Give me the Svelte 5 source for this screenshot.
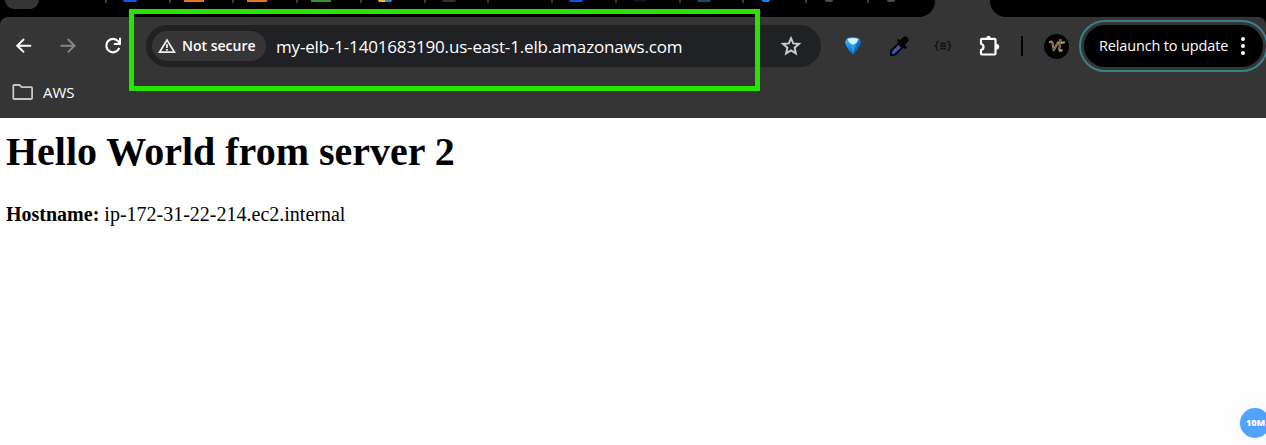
<script>
  const tabs = [
    { w: 64, color: '#0b57e8', shape: 'round', pos: 18 },
    { w: 63, color: '#ea761c', shape: 'box', pos: 15 },
    { w: 64, color: '#ea761c', shape: 'box', pos: 15 },
    { w: 64, color: '#3f8c2c', shape: 'box', pos: 15 },
    { w: 64, color: 'linear-gradient(90deg, #ffb020 50%, #1695d0 50%)', shape: 'round', pos: 18 },
    { w: 63, color: '#303135', shape: 'round', pos: 18 },
    { w: 64, color: 'transparent', shape: 'box', pos: 14 },
    { w: 64, color: '#0b57e8', shape: 'round', pos: 18 },
    { w: 64, color: '#030c20', shape: 'round', pos: 18 },
    { w: 63, color: '#22465a', shape: 'round', pos: 18 },
    { w: 63, color: '#1a80ff', shape: 'small', pos: 20 },
    { w: 62, color: '#4a4c50', shape: 'small', pos: 20 },
    { w: 62, color: '#4a4c50', shape: 'small', pos: 20 }
  ];
</script>

<div class="window">
  <div class="strip">
    <div class="left-tabs">
      <div class="search-tab"></div>
      {#each tabs as tab}
        <div class="tab" style="width: {tab.w}px">
          <i class="sep"></i>
          <i class="fav {tab.shape}" style="background: {tab.color}; margin-left: {tab.pos - 2}px"></i>
        </div>
      {/each}
    </div>
    <div class="right-strip"></div>
  </div>

  <div class="toolbar">
    <svg class="back" width="20" height="20" viewBox="0 0 20 20" fill="none" stroke="#fff" stroke-width="2">
      <path d="M17.2 9.700H4M10 3 3.300 9.700l6.700 6.700" />
    </svg>
    <svg class="forward" width="20" height="20" viewBox="0 0 20 20" fill="none" stroke="#858585" stroke-width="2">
      <path d="M2.500 9.700H16M9.800 3 16.500 9.700l-6.700 6.700" />
    </svg>
    <svg class="reload" width="20" height="20" viewBox="0 0 20 20" fill="none" stroke="#fff" stroke-width="2.200">
      <path d="M16.300 11.900A6.700 6.700 0 1 1 15.100 5.200L16.500 6.800" />
      <path d="M17 1.700v6.200h-6.200" stroke-width="2" />
    </svg>

    <div class="address">
      <div class="chip">
        <svg width="18" height="16" viewBox="0 0 18 16" fill="none" stroke="#f1f1f1">
          <path d="M9 2 1.500 14.200h15Z" stroke-width="1.700" />
          <path d="M9 6v4M9 11v1.800" stroke-width="1.700" />
        </svg>
        <span>Not secure</span>
      </div>
      <span class="url">my-elb-1-1401683190.us-east-1.elb.amazonaws.com</span>
      <svg class="star" width="22" height="22" viewBox="0 0 22 22" fill="none" stroke="#c9cacc" stroke-width="2">
        <path d="m11 3.200 2.200 5.200 5.800.5-4.400 3.800 1.300 5.700-4.900-3-4.900 3 1.300-5.700L3 8.900l5.800-.5Z" />
      </svg>
    </div>

    <svg class="gem" width="18" height="20" viewBox="0 0 18 20">
      <defs>
        <linearGradient id="gem" x1="0" y1="0" x2="1" y2="1">
          <stop offset="0" stop-color="#56c0f8" /><stop offset=".45" stop-color="#1689e6" /><stop offset="1" stop-color="#033d7d" />
        </linearGradient>
      </defs>
      <path d="M3 2.500Q9 0 15 2.500L17 6Q16 11 9.800 18.500H8.200Q2 11 1 6Z" fill="url(#gem)" />
      <path d="M3.500 3Q9 .8 14.500 3L12.500 7 9 9 5.500 7Z" fill="#d8f3fd" />
      <path d="m5.500 7 3.500 10L12.500 7 9 9Z" fill="#2b9fe9" />
    </svg>

    <svg class="picker" width="22" height="22" viewBox="0 0 22 22">
      <path d="M3 20v-4L12 7l4 4-9.500 9Z" fill="#4052bd" stroke="#050507" stroke-width="2" stroke-linejoin="round" />
      <path d="M10.800 8.200 14.300 11.700" stroke="#050507" stroke-width="3" />
      <path d="m10.500 5.500 7 7" stroke="#050507" stroke-width="2.800" stroke-linecap="round" />
      <path d="m14.500 7.500 2.700-2.700" stroke="#050507" stroke-width="6.500" stroke-linecap="round" />
    </svg>

    <svg class="braces" width="18" height="14" viewBox="0 0 18 14" fill="none" stroke="#121212" stroke-width="1.300">
      <path d="M4.500 2.500H4Q2.800 2.500 2.800 4V5.500L1.300 7l1.500 1.500V10q0 1.500 1.700 1.500M13.500 2.500h.5q1.200 0 1.200 1.500V5.500L16.700 7l-1.500 1.500V10q0 1.500-1.700 1.500M6 4.500h6M6 7h6M6 9.500h6" />
    </svg>

    <svg class="puzzle" width="23" height="23" viewBox="0 0 23 23" fill="none" stroke="#fff" stroke-width="2.200" stroke-linejoin="round">
      <path d="M4 3.800h12.500q1 0 1 1V18.500q0 1-1 1H4q-1 0-1-1V15q2.500-.7 2.500-3.100T3 8.700V4.800q0-1 1-1Z" />
      <path d="M8 3.500Q8.500 .7 10.500 .7t2.500 2.800ZM18 8.800q3.200.2 3.200 3T18 14.800Z" fill="#fff" stroke="none" />
    </svg>
    <div class="divider"></div>
    <div class="avatar">
      <svg width="18" height="16" viewBox="0 0 18 16" fill="none" stroke="#b0976b" stroke-width="2.200" stroke-linecap="round" stroke-linejoin="round">
        <path d="M2 4q2-1 2.500 1l1.300 7L10 4.500M12.500 1.800 11.300 11q0 2.200 2.400 1.400M9.800 5.500 16 4.300" />
        <path d="M2.500 4q1.500-.5 2 1l1.300 7L10 4.500M12.500 1.800 11.300 11" stroke="#463c2b" stroke-width=".7" />
      </svg>
    </div>
    <div class="ring">
      <div class="relaunch">
        <span>Relaunch to update</span>
        <div class="dots"><i></i><i></i><i></i></div>
      </div>
    </div>
  </div>

  <div class="bookmarks">
    <svg width="22" height="18" viewBox="0 0 22 18" fill="none" stroke="#c7c7c7" stroke-width="1.800" stroke-linejoin="round">
      <path d="M2.300 3q0-1 1-1H8.500l2.200 2.200h9.400q1 0 1 1V15q0 1-1 1H3.300q-1 0-1-1Z" />
    </svg>
    <span>AWS</span>
  </div>

  <main>
    <h1>Hello World from server 2</h1>
    <p><b>Hostname:</b> ip-172-31-22-214.ec2.internal</p>
  </main>

  <div class="highlight"></div>
  <div class="badge">10M</div>
</div>

<style>
  :global(body) { margin: 0; background: #fff; }
  .window {
    position: relative;
    width: 1266px;
    height: 445px;
    overflow: hidden;
    background: #000;
    font-family: "Open Sans", "Noto Sans", sans-serif;
  }
  svg { display: block; flex: none; }
  span { white-space: nowrap; }
  .strip { display: flex; justify-content: space-between; height: 17px; background: #353535; }
  .left-tabs { display: flex; width: 935px; background: #000; border-bottom-right-radius: 16px; }
  .search-tab { width: 34px; height: 9px; margin: 0 66px 0 5px; flex: none; background: #353535; border-radius: 0 0 12px 12px; }
  .tab { display: flex; flex: none; height: 3px; }
  .sep { width: 2px; height: 3px; background: #3c3c3c; }
  .fav { width: 20px; height: 2px; }
  .fav.round { width: 14px; border-radius: 0 0 7px 7px; }
  .fav.small { width: 8px; border-radius: 0 0 4px 4px; }
  .right-strip { width: 276px; background: #000; border-bottom-left-radius: 16px; }
  .toolbar {
    display: flex;
    align-items: center;
    height: 58px;
    padding-left: 14px;
    border-radius: 8px 8px 0 0;
    background: #353535;
  }
  .forward { margin-left: 24px; }
  .reload { margin-left: 25px; }
  .address {
    display: flex;
    align-items: center;
    flex: none;
    width: 669px;
    height: 42px;
    margin-left: 23px;
    padding-left: 6px;
    border-radius: 21px;
    background: #202125;
  }
  .chip {
    display: flex;
    align-items: center;
    flex: none;
    width: 108px;
    height: 30px;
    padding-left: 6px;
    border-radius: 15px;
    background: #363636;
    color: #fff;
    font-size: 14px;
    font-weight: 650;
  }
  .chip span { margin: -2px 0 0 6px; }
  .url { width: 406px; margin: 0 0 0 10px; color: #fff; font-size: 17px; letter-spacing: -.17px; }
  .star { margin-left: 98px; }
  .gem { margin-left: 23px; }
  .picker { margin-left: 26px; }
  .braces { margin-left: 24px; }
  .puzzle { margin-left: 26px; }
  .divider { flex: none; width: 2px; height: 20px; margin-left: 20px; background: #000; }
  .avatar { display: grid; place-items: center; flex: none; width: 25px; height: 25px; margin-left: 21px; border-radius: 50%; background: #000; }
  .ring { flex: none; box-sizing: border-box; width: 189px; height: 52px; margin-left: 10px; padding: 3px; border: 2px solid #36838c; border-radius: 26px; }
  .relaunch { display: flex; align-items: center; height: 42px; padding-left: 15px; border-radius: 21px; background: #000; color: #fff; font-size: 14.500px; letter-spacing: -.15px; }
  .relaunch span { width: 129px; margin-top: -2px; }
  .dots { display: grid; gap: 3px; margin-left: 13px; }
  .dots i { width: 4px; height: 4px; border-radius: 50%; background: #fff; }
  .bookmarks { display: flex; align-items: center; height: 34px; padding: 0 0 9px 11px; background: #353535; color: #fff; font-size: 15px; }
  .bookmarks span { margin: -1px 0 0 10px; }
  main { height: 327px; padding-left: 6px; background: #fff; color: #000; font-family: "Liberation Serif", serif; }
  h1 { margin: 0; padding-top: 11px; font-size: 40px; line-height: 46px; }
  p { margin: 28px 0 0; font-size: 20px; line-height: 23px; }
  .highlight { position: absolute; left: 129px; top: 9px; width: 621px; height: 72px; border: 5px solid #27e300; }
  .badge {
    position: absolute;
    left: 1240px;
    top: 408px;
    width: 30px;
    height: 30px;
    border-radius: 50%;
    background: #51a3ff;
    box-shadow: 0 0 22px rgba(80, 90, 190, .1);
    color: #fff;
    font: 800 9px/30px "Open Sans", sans-serif;
    text-indent: 6px;
  }
</style>
